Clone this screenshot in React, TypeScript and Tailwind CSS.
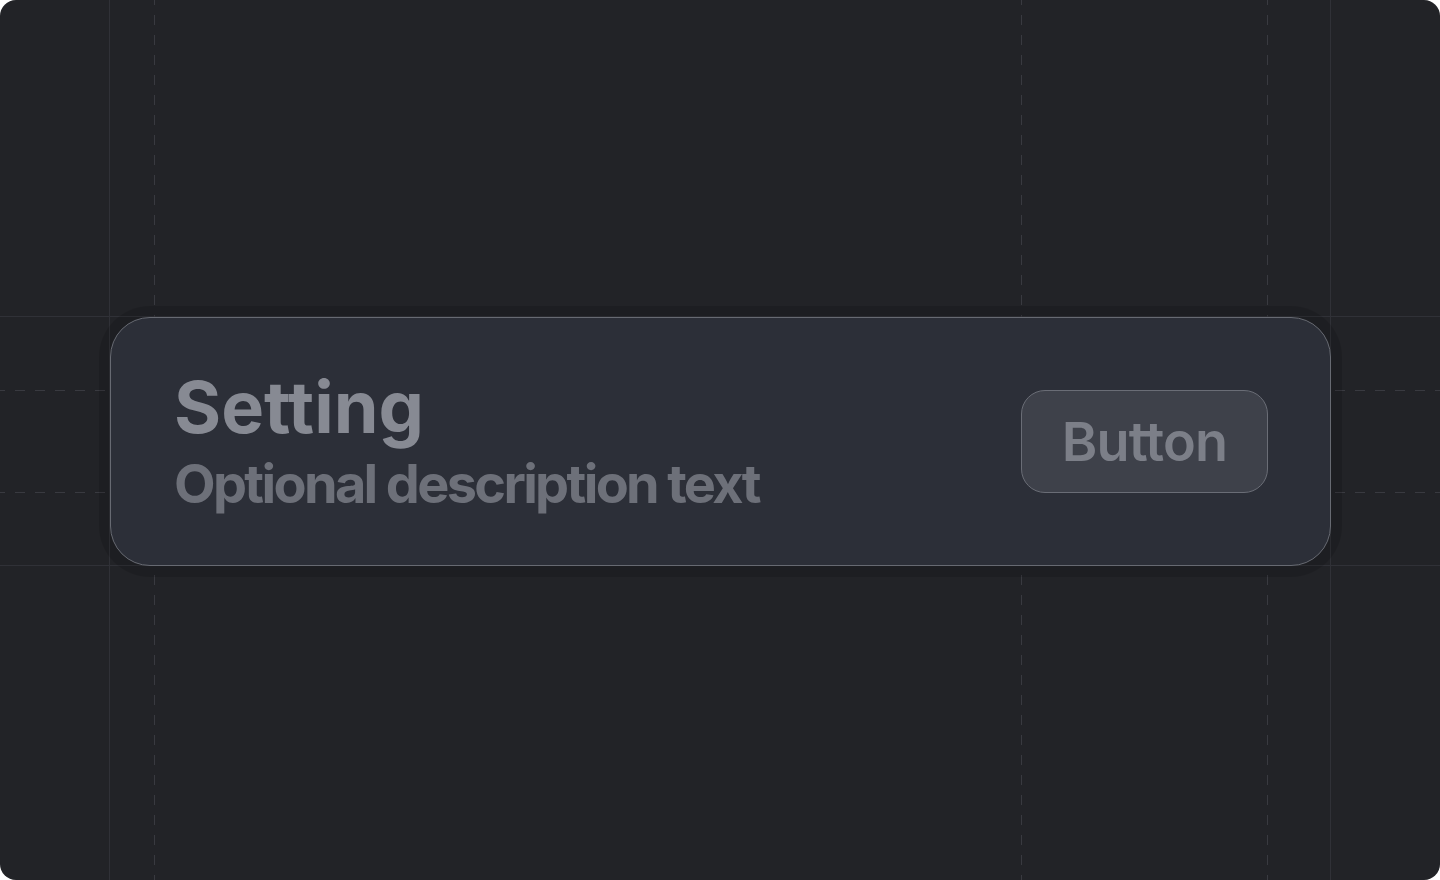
import React from 'react';

const dashV =
  'bg-[repeating-linear-gradient(to_bottom,#393a40_0_5px,transparent_5px_15px,#393a40_15px_20px)]';
const dashH =
  'bg-[repeating-linear-gradient(to_right,#393a40_0_5px,transparent_5px_15px,#393a40_15px_20px)]';

// layout guides drawn on the canvas behind the card
function Guides() {
  return (
    <div className="absolute inset-0 pointer-events-none">
      <div className="absolute top-0 bottom-0 left-[109px] w-px bg-[#303137]" />
      <div className="absolute top-0 bottom-0 left-[1330px] w-px bg-[#303137]" />
      <div className="absolute left-0 right-0 top-[316px] h-px bg-[#303137]" />
      <div className="absolute left-0 right-0 top-[565px] h-px bg-[#303137]" />

      <div className={`absolute top-0 bottom-0 left-[154px] w-px ${dashV}`} />
      <div className={`absolute top-0 bottom-0 left-[1021px] w-px ${dashV}`} />
      <div className={`absolute top-0 bottom-0 left-[1267px] w-px ${dashV}`} />
      <div className={`absolute left-0 right-0 top-[390px] h-px ${dashH}`} />
      <div className={`absolute left-0 right-0 top-[492px] h-px ${dashH}`} />
    </div>
  );
}

export default function App() {
  return (
    <div className="bg-white w-[1440px] h-[880px]">
      <div
        className="relative w-[1440px] h-[880px] overflow-hidden rounded-[16px] bg-[#222327] pl-[110px] pt-[317px]"
        style={{ fontFamily: 'Inter, "Noto Sans", sans-serif' }}
      >
        <Guides />

        {/* Setting row */}
        <div className="relative w-[1221px] h-[249px] rounded-[40px] border border-[#676a72] bg-[#2c2f38] shadow-[0_0_0_11px_rgba(0,0,0,0.12)] flex items-center justify-between pl-[63px] pr-[62px]">
          <div className="flex flex-col gap-[12px]">
            <h2 className="text-[72px] leading-[72px] font-bold tracking-normal text-[#878a93]">
              Setting
            </h2>
            <p className="text-[54px] leading-[58px] font-bold tracking-[-0.049em] text-[#6d7079]">
              Optional description text
            </p>
          </div>

          <button className="w-[247px] h-[103px] rounded-[24px] border border-[#6a6d76] bg-[#3e414a] text-[54px] font-semibold tracking-[-0.015em] text-[#7c7f88] flex items-center justify-center">
            Button
          </button>
        </div>
      </div>
    </div>
  );
}
